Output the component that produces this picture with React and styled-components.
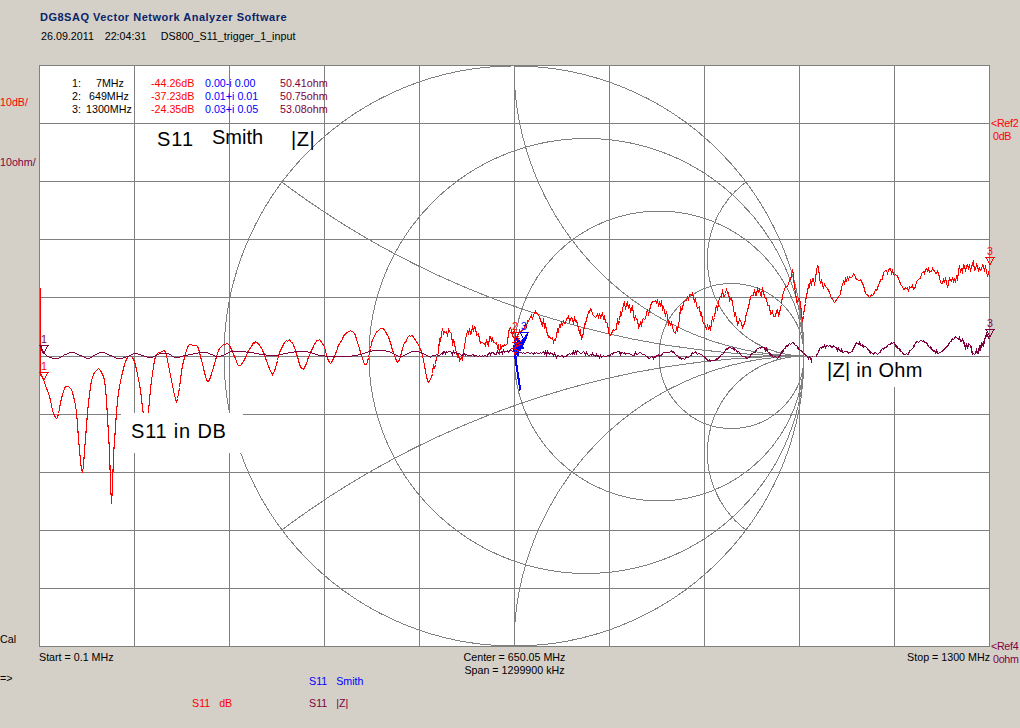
import React from "react";
import styled, { createGlobalStyle } from "styled-components";

const RED = "#ff0000";
const BLUE = "#0000ff";
const PURPLE = "#800040";
const GRAY = "#808080";

// trace key points, read off the reference in page coordinates
const redKeys = [
  [41, 375], [45, 385], [49, 396], [53, 413], [57, 417], [60, 402], [64, 388], [68, 386], [72, 392], [76, 412],
  [79, 450], [82, 472], [84, 450], [87, 412], [91, 380], [97, 369], [101, 372], [105, 388], [109, 450], [111, 503],
  [113, 455], [117, 400], [122, 372], [127, 357], [131, 356], [135, 365], [140, 390], [144, 420], [147, 418], [151, 380],
  [155, 356], [160, 352], [165, 352], [170, 375], [175, 398], [177, 398], [182, 365], [188, 345], [193, 345], [197, 346],
  [201, 360], [207, 381], [212, 370], [218, 350], [224, 344], [229, 345], [235, 358], [238, 365], [243, 361], [248, 350],
  [255, 342], [262, 350], [272, 373], [280, 350], [287, 340], [293, 345], [302, 369], [310, 352], [317, 340], [323, 345],
  [330, 363], [338, 345], [348, 331], [355, 336], [365, 364], [372, 340], [380, 328], [387, 335], [397, 361], [403, 345],
  [410, 335], [417, 343], [422, 355], [427, 380], [430, 378], [435, 360], [442, 332], [448, 333], [452, 340], [460, 360],
  [465, 340], [472, 328], [478, 335], [482, 345], [490, 340], [497, 345], [500, 350], [505, 345], [510, 330], [517, 336],
  [525, 325], [535, 315], [545, 325], [548, 336], [556, 335], [560, 322], [568, 318], [575, 322], [582, 335], [585, 320],
  [590, 312], [600, 315], [607, 325], [611, 335], [618, 320], [625, 305], [632, 310], [640, 325], [645, 315], [652, 305],
  [660, 303], [665, 315], [672, 325], [675, 335], [680, 310], [690, 298], [695, 300], [703, 320], [707, 330], [712, 320],
  [720, 298], [725, 292], [730, 297], [735, 315], [740, 325], [745, 320], [750, 300], [757, 290], [765, 295], [770, 310],
  [775, 315], [780, 305], [785, 285], [790, 280], [792, 272], [795, 295], [800, 305], [802, 320], [805, 300], [810, 282],
  [815, 280], [817, 268], [820, 280], [828, 292], [833, 300], [838, 295], [845, 280], [853, 275], [860, 280], [865, 292],
  [870, 297], [878, 285], [885, 272], [893, 272], [900, 282], [905, 288], [915, 285], [925, 270], [935, 272], [945, 280],
  [952, 283], [960, 270], [970, 265], [980, 265], [985, 270], [989, 276],
];

const purpleKeys = [
  [40, 345], [42, 352], [50, 357], [57, 358], [65, 354], [72, 352], [80, 355], [88, 358], [95, 354], [102, 352],
  [110, 355], [118, 358], [127, 356], [134, 353], [142, 355], [150, 357], [160, 353], [167, 353], [175, 357], [185, 355],
  [195, 353], [205, 352], [218, 356], [232, 351], [250, 352], [262, 354], [275, 355], [290, 352], [305, 351], [320, 355],
  [340, 356], [355, 355], [375, 350], [388, 351], [400, 356], [412, 351], [420, 352], [430, 356], [445, 352], [460, 354],
  [480, 355], [500, 352], [515, 350], [530, 353], [545, 352], [560, 356], [575, 352], [590, 354], [605, 356], [618, 352],
  [630, 354], [640, 353], [650, 357], [660, 355], [665, 351], [672, 351], [680, 357], [685, 358], [695, 352], [700, 355],
  [712, 360], [720, 356], [730, 347], [746, 357], [762, 347], [775, 357], [790, 343], [800, 350], [808, 357], [815, 357],
  [820, 347], [832, 346], [840, 350], [850, 352], [857, 343], [875, 353], [892, 343], [905, 354], [920, 340], [938, 352],
  [955, 338], [965, 345], [975, 352], [985, 340], [989, 335],
];

const blueKeys = [
  [520, 390], [518, 378], [516, 365], [515, 358], [514, 352], [516, 360], [513, 345], [518, 355], [514, 340], [520, 350],
  [516, 336], [522, 347], [515, 345], [524, 340], [517, 352], [526, 335], [520, 348], [525, 338], [515, 354], [527, 334],
  [518, 346], [522, 341], [514, 350],
];

// the red trace folded onto itself where it meets the smith chart centre
const centerRed = [
  [512, 336], [519, 338], [513, 342], [520, 344], [512, 348], [518, 350], [514, 354], [516, 344], [522, 340],
];

// small fixed pseudo random sequence, so the noise is the same on every load
const makeRandom = seed => {
  let s = seed;
  return () => {
    s = (s * 16807) % 2147483647;
    return s / 2147483647 - 0.5;
  };
};

const catmull = (keys, x) => {
  let i = 0;
  while (i < keys.length - 2 && keys[i + 1][0] < x) i++;
  const p0 = keys[Math.max(i - 1, 0)][1];
  const [x1, p1] = keys[i];
  const [x2, p2] = keys[i + 1];
  const p3 = keys[Math.min(i + 2, keys.length - 1)][1];
  const t = Math.min(Math.max((x - x1) / (x2 - x1), 0), 1);
  return (
    0.5 *
    (2 * p1 +
      (p2 - p0) * t +
      (2 * p0 - 5 * p1 + 4 * p2 - p3) * t * t +
      (3 * p1 - p0 - 3 * p2 + p3) * t * t * t)
  );
};

const tracePoints = (keys, amount, seed) => {
  const random = makeRandom(seed);
  const pts = [];
  for (let x = keys[0][0]; x <= 989; x++) {
    const y = catmull(keys, x) + random() * amount(x);
    pts.push(`${x}.5,${Math.round(y)}.5`);
  }
  return pts.join(" ");
};

const toPoints = keys => keys.map(([x, y]) => `${x}.5,${y}.5`).join(" ");

const redNoise = x => (x < 250 ? 0 : x < 430 ? 1.5 : x < 820 ? 10 : x < 940 ? 6 : 13);
const purpleNoise = x => (x < 430 ? 0 : x < 930 ? 3 : x < 960 ? 4 : 10);

const redTrace = "40.5,287.5 40.5,375.5 " + tracePoints(redKeys, redNoise, 4711);
const purpleTrace = tracePoints(purpleKeys, purpleNoise, 977);

const verticals = Array.from({ length: 11 }, (_, i) => 39 + i * 95);
const horizontals = [65, 123, 181, 239, 297, 356, 414, 472, 530, 588, 646];

const CX = 514;
const CY = 356;
const R = 290;
const END = CX + R;

const resistance = [1 / 3, 1, 3].map(r => R / (r + 1));
const reactance = [1 / 3, 1, 3].map(x => R / x);

const GlobalStyle = createGlobalStyle`
  html, body {
    margin: 0;
    padding: 0;
    background: #d4d0c8;
  }
`;

const Page = styled.div`
  width: 1020px;
  height: 728px;
  overflow: hidden;
  background: #d4d0c8;
  font-family: "Liberation Sans", Arial, sans-serif;
  font-size: 10.7px;
  line-height: 13px;
  color: #000;
`;

const Header = styled.header`
  height: 65px;
  padding: 11px 0 0 40px;
  box-sizing: border-box;
`;

const Title = styled.div`
  color: #0a246a;
  font-size: 11px;
  font-weight: bold;
  letter-spacing: 0.5px;
  white-space: pre;
`;

const Subtitle = styled.div`
  margin-top: 6px;
  padding-left: 1px;
  letter-spacing: 0.02px;
  word-spacing: 0.6px;
  white-space: pre;
`;

const Body = styled.div`
  display: grid;
  grid-template-columns: 39px 951px 30px;
`;

const LeftAxis = styled.div`
  display: flex;
  flex-direction: column;
  padding-top: 31px;
`;

const AxisLabel = styled.div`
  color: ${p => p.$color};
  margin-bottom: ${p => p.$gap || 0}px;
  white-space: nowrap;
`;

const RightAxis = styled.div`
  display: flex;
  flex-direction: column;
  padding-top: 52px;
`;

const RefLabel = styled.div`
  color: ${p => p.$color};
  margin-bottom: ${p => p.$gap || 0}px;
  padding-left: ${p => p.$indent || 1}px;
  letter-spacing: -0.3px;
  line-height: 13px;
  white-space: pre;
`;

const Center = styled.div`
  display: flex;
  flex-direction: column;
`;

const Plot = styled.div`
  position: relative;
  width: 951px;
  height: 582px;
  background: #fff;
`;

const PlotSvg = styled.svg`
  display: block;
  overflow: visible;
`;

const Readout = styled.div`
  position: absolute;
  left: 33px;
  top: 12px;
  display: grid;
  grid-template-columns: 14px 65px 54px 75px auto;
  grid-auto-rows: 13px;
  white-space: pre;
`;

const Cell = styled.div`
  color: ${p => p.$color || "#000"};
  padding-left: ${p => p.$indent || 0}px;
`;

const Note = styled.div`
  position: absolute;
  left: ${p => p.$x}px;
  top: ${p => p.$y}px;
  font-size: 20px;
  line-height: 23px;
  letter-spacing: ${p => p.$track || 0}px;
  white-space: pre;
`;

const NoteBox = styled(Note)`
  background: #fff;
  width: ${p => p.$w}px;
  height: ${p => p.$h}px;
  padding: ${p => p.$top}px 0 0 ${p => p.$left}px;
  box-sizing: border-box;
`;

const MarkerWrap = styled.div`
  position: absolute;
  left: ${p => p.$x - 5 - 39}px;
  top: ${p => p.$y - 19 - 65}px;
  width: 10px;
  color: ${p => p.$color};
  display: flex;
  flex-direction: column;
  align-items: center;
  line-height: 11px;
`;

const MarkerTriangle = styled.svg`
  display: block;
`;

const ScaleRow = styled.div`
  display: grid;
  grid-template-columns: 1fr auto 1fr;
  height: 23px;
  padding-top: 4px;
  box-sizing: border-box;
`;

const ScaleStop = styled.div`
  text-align: right;
`;

const ScaleCenter = styled.div`
  text-align: center;
`;

const Legend = styled.div`
  display: grid;
  grid-template-columns: 192px 117px auto;
  grid-template-rows: 22px 22px;
  padding-top: 5px;
  white-space: pre;
`;

const LegendItem = styled.div`
  color: ${p => p.$color || "#000"};
  margin-top: ${p => p.$shift || 0}px;
`;

const Marker = ({ x, y, color, n }) => (
  <MarkerWrap $x={x} $y={y} $color={color}>
    <span>{n}</span>
    <MarkerTriangle width="10" height="8" viewBox="0 0 10 8">
      <path d="M1 .5H9L5 7.5Z" fill="none" stroke={color} shapeRendering="crispEdges" />
    </MarkerTriangle>
  </MarkerWrap>
);

const rows = [
  ["1:", "7MHz", 10, "-44.26dB", "0.00-i 0.00", "50.41ohm"],
  ["2:", "649MHz", 3, "-37.23dB", "0.01+i 0.01", "50.75ohm"],
  ["3:", "1300MHz", 0, "-24.35dB", "0.03+i 0.05", "53.08ohm"],
];

export default function App() {
  return (
    <Page>
      <GlobalStyle />
      <Header>
        <Title>DG8SAQ Vector Network Analyzer Software</Title>
        <Subtitle>26.09.2011   22:04:31    DS800_S11_trigger_1_input</Subtitle>
      </Header>
      <Body>
        <LeftAxis>
          <AxisLabel $color={RED} $gap={47}>10dB/</AxisLabel>
          <AxisLabel $color={PURPLE} $gap={464}>10ohm/</AxisLabel>
          <AxisLabel $color="#000">Cal</AxisLabel>
        </LeftAxis>
        <Center>
          <Plot>
            <PlotSvg width="951" height="582" viewBox="39 65 951 582">
              <defs>
                <clipPath id="smith">
                  <circle cx={CX} cy={CY} r={R} />
                </clipPath>
              </defs>
              <g stroke={GRAY} strokeWidth="1" fill="none" shapeRendering="crispEdges">
                {verticals.map(x => (
                  <line key={x} x1={x + 0.5} x2={x + 0.5} y1="65" y2="647" />
                ))}
                {horizontals.map(y => (
                  <line key={y} x1="39" x2="990" y1={y + 0.5} y2={y + 0.5} />
                ))}
                <circle cx={CX} cy={CY} r={R} />
                <g clipPath="url(#smith)">
                  {resistance.map(r => (
                    <circle key={r} cx={END - r} cy={CY} r={r} />
                  ))}
                  {reactance.map(r => (
                    <React.Fragment key={r}>
                      <circle cx={END} cy={CY - r} r={r} />
                      <circle cx={END} cy={CY + r} r={r} />
                    </React.Fragment>
                  ))}
                </g>
              </g>
              <g fill="none" strokeWidth="1.1" shapeRendering="crispEdges">
                <polyline points={redTrace} stroke={RED} />
                <polyline points={purpleTrace} stroke={PURPLE} strokeWidth="1.3" />
                <polyline points={toPoints(blueKeys)} stroke={BLUE} strokeWidth="2" />
                <polyline points={toPoints(centerRed)} stroke={RED} />
              </g>
            </PlotSvg>
            <Readout>
              {rows.map(([idx, freq, indent, db, z, ohm]) => (
                <React.Fragment key={idx}>
                  <Cell>{idx}</Cell>
                  <Cell $indent={indent}>{freq}</Cell>
                  <Cell $color={RED}>{db}</Cell>
                  <Cell $color={BLUE}>{z}</Cell>
                  <Cell $color={PURPLE}>{ohm}</Cell>
                </React.Fragment>
              ))}
            </Readout>
            <Note $x={118} $y={63} $track={1}>S11</Note>
            <Note $x={173} $y={61}>Smith</Note>
            <Note $x={252} $y={63} $track={0.5}>|Z|</Note>
            <NoteBox $x={82} $y={348} $w={122} $h={40} $top={7} $left={10} $track={0.8}>S11 in DB</NoteBox>
            <NoteBox $x={773} $y={292} $w={115} $h={30} $top={2} $left={15} $track={0.3}>|Z| in Ohm</NoteBox>
            <Marker x={44} y={353} color={PURPLE} n="1" />
            <Marker x={44} y={380} color={RED} n="1" />
            <Marker x={515} y={340} color={RED} n="2" />
            <Marker x={524} y={340} color={BLUE} n="3" />
            <Marker x={990} y={265} color={RED} n="3" />
            <Marker x={990} y={337} color={PURPLE} n="3" />
          </Plot>
          <ScaleRow>
            <div>Start = 0.1 MHz</div>
            <ScaleCenter>
              Center = 650.05 MHz
              <br />
              Span = 1299900 kHz
            </ScaleCenter>
            <ScaleStop>Stop = 1300 MHz</ScaleStop>
          </ScaleRow>
        </Center>
        <RightAxis>
          <RefLabel $color={RED}>&lt;Ref2</RefLabel>
          <RefLabel $color={RED} $gap={497} $indent={3}>0dB</RefLabel>
          <RefLabel $color={PURPLE}>&lt;Ref4</RefLabel>
          <RefLabel $color={PURPLE} $indent={3}>0ohm</RefLabel>
        </RightAxis>
      </Body>
      <Legend>
        <LegendItem $shift={-3}>=&gt;</LegendItem>
        <div />
        <LegendItem $color={BLUE}>S11   Smith</LegendItem>
        <div />
        <LegendItem $color={RED}>S11   dB</LegendItem>
        <LegendItem $color={PURPLE}>S11   |Z|</LegendItem>
      </Legend>
    </Page>
  );
}
